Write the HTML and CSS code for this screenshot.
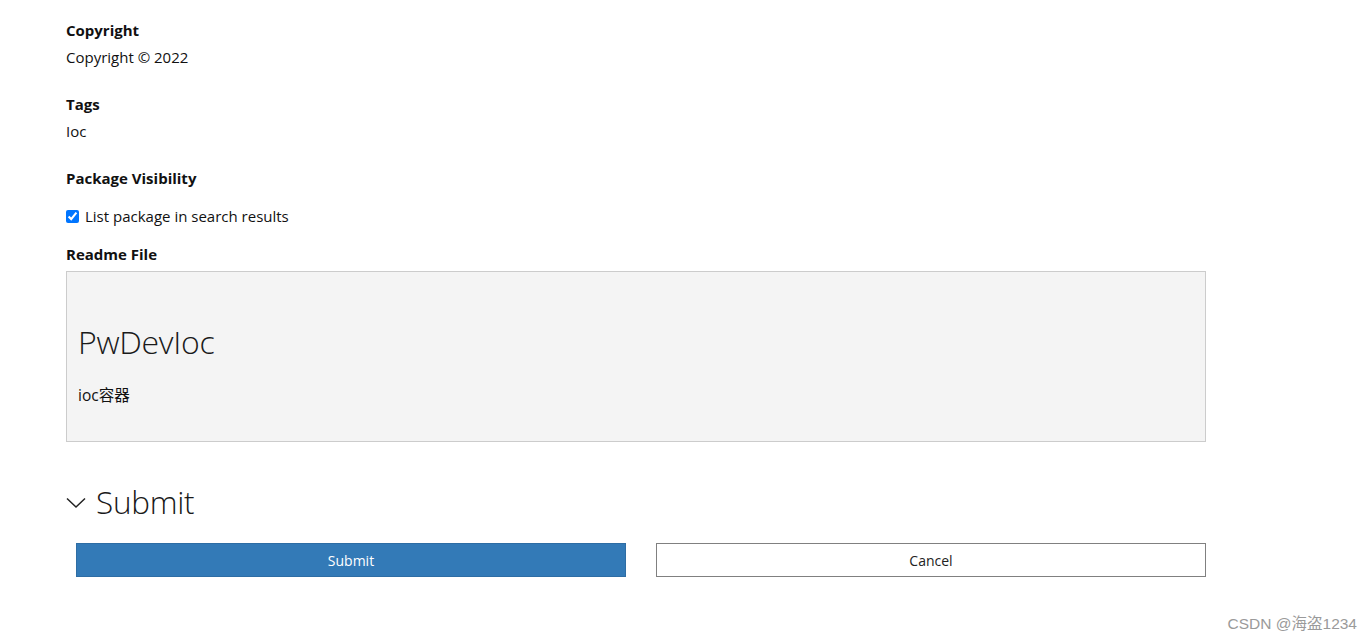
FILE: index.html
```html
<!DOCTYPE html>
<html>
<head>
<meta charset="utf-8">
<link rel="stylesheet" href="styles.css">
</head>
<body>
<div class="page">
  <section class="field">
    <div class="label">Copyright</div>
    <div class="value">Copyright © 2022</div>
  </section>
  <section class="field">
    <div class="label">Tags</div>
    <div class="value">Ioc</div>
  </section>
  <section class="field vis">
    <div class="label">Package Visibility</div>
    <label class="check"><input type="checkbox" checked> List package in search results</label>
  </section>
  <section class="readme">
    <div class="label">Readme File</div>
    <div class="readme-box">
      <h1 class="readme-title">PwDevIoc</h1>
      <p class="readme-text">ioc容器</p>
    </div>
  </section>
  <h2 class="submit-head">
    <svg class="chev" width="20" height="12" viewBox="0 0 20 12"><path d="M1 1.5 L10 10 L19 1.5" fill="none" stroke="#222" stroke-width="1.5"/></svg>
    <span>Submit</span>
  </h2>
  <div class="actions">
    <button class="btn primary">Submit</button>
    <button class="btn secondary">Cancel</button>
  </div>
</div>
<div class="watermark">CSDN @海盗1234</div>
</body>
</html>
```
FILE: styles.css
```css
html, body { margin: 0; padding: 0; background: #fff; }
body {
  font-family: "Open Sans", "Noto Sans", "Noto Sans CJK SC", sans-serif;
  font-size: 15px;
  color: #111;
  position: relative;
  height: 641px;
  overflow: hidden;
}
.page {
  width: 1140px;
  margin-left: 66px;
  padding-top: 19px;
}
.label {
  font-weight: 700;
  font-size: 15px;
  line-height: 22px;
}
.field { margin-bottom: 25px; }
.value { line-height: 22px; margin-top: 5px; }
.vis { margin-bottom: 17px; }
.check {
  display: flex;
  align-items: center;
  gap: 6px;
  margin-top: 17px;
}
.check input { margin: 0; width: 13px; height: 13px; accent-color: #0075ff; }
.readme .label { margin-bottom: 6px; }
.readme-box {
  background: #f4f4f4;
  border: 1px solid #cccccc;
  height: 169px;
  padding: 0 11px;
  box-sizing: content-box;
}
.readme-title {
  margin: 0;
  padding-top: 48px;
  font-weight: 300;
  font-size: 32px;
  line-height: 44px;
  color: #1a1a1a;
  letter-spacing: -0.3px;
}
.readme-text { margin: 21px 0 0; line-height: 20px; font-size: 15.5px; }
.submit-head {
  display: flex;
  align-items: center;
  gap: 10px;
  margin: 37px 0 0;
  font-weight: 300;
  font-size: 31.5px;
  line-height: 46px;
  letter-spacing: -0.3px;
  color: #1a1a1a;
}
.chev { margin-top: 2px; }
.actions {
  display: grid;
  grid-template-columns: 550px 550px;
  column-gap: 30px;
  margin: 18px 0 0 10px;
}
.btn {
  height: 34px;
  font-family: inherit;
  font-size: 14px;
  cursor: pointer;
}
.primary { background: #337ab7; color: #fff; border: 1px solid #2e6da4; }
.secondary { background: #fff; color: #222; border: 1px solid #808080; }
.watermark {
  position: absolute;
  right: 15px;
  bottom: 8px;
  font-family: "Liberation Sans", "Noto Sans CJK SC", sans-serif;
  font-size: 15.5px;
  color: #9a9a9a;
}
```
